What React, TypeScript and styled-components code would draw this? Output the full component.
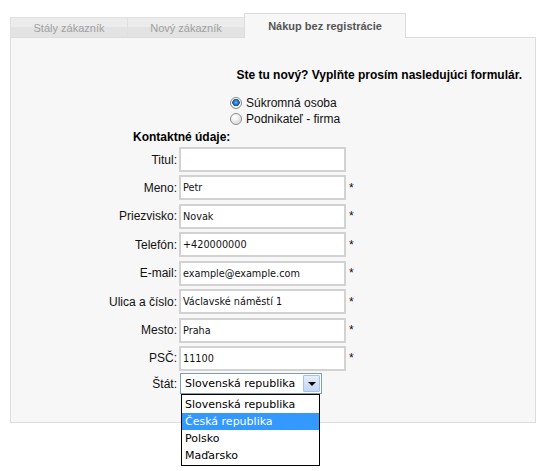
import React from "react";
import styled, { createGlobalStyle } from "styled-components";

const Global = createGlobalStyle`
  html, body { margin: 0; padding: 0; background: #ffffff; }
  body { font-family: "Liberation Sans", Arial, sans-serif; font-size: 12px; color: #111; }
`;

const Page = styled.div`
  box-sizing: border-box;
  padding: 13px 0 0 10px;
  width: 546px;
  min-height: 471px;
`;

const Frame = styled.div`
  width: 526px;
`;

const TabBar = styled.div`
  display: flex;
  align-items: flex-end;
  border-bottom: 1px solid #dddddd;
`;

const Tab = styled.div<{ $active?: boolean; $w: number }>`
  box-sizing: border-box;
  width: ${(p) => p.$w}px;
  margin-left: -1px;
  &:first-child { margin-left: 0; }
  height: ${(p) => (p.$active ? 25 : 20)}px;
  margin-bottom: ${(p) => (p.$active ? -1 : 0)}px;
  border: 1px solid ${(p) => (p.$active ? "#dcdcdc" : "#e0e0e0")};
  border-bottom: none;
  background: ${(p) =>
    p.$active
      ? "#f7f7f7"
      : "linear-gradient(to bottom, #ececec 0%, #ececec 50%, #e3e3e3 50%, #e3e3e3 100%)"};
  color: ${(p) => (p.$active ? "#555555" : "#a0a0a0")};
  font-weight: ${(p) => (p.$active ? "bold" : "normal")};
  font-size: 11px;
  display: flex;
  align-items: center;
  justify-content: center;
  padding-bottom: ${(p) => (p.$active ? 1 : 0)}px;
`;

const Panel = styled.div`
  box-sizing: border-box;
  border: 1px solid #dddddd;
  border-top: none;
  background: #f7f7f7;
  padding: 30px 13px 27px 0;
`;

const Heading = styled.div`
  font-weight: bold;
  font-size: 12px;
  line-height: 14px;
  text-align: right;
  color: #000;
`;

const RadioGroup = styled.div`
  margin: 13px 0 0 219px;
  display: flex;
  flex-direction: column;
`;

const RadioRow = styled.label`
  display: flex;
  align-items: center;
  gap: 4px;
  height: 16px;
  font-size: 12px;
  color: #111;
`;

const RadioDot = styled.span<{ $checked?: boolean }>`
  box-sizing: border-box;
  width: 12px;
  height: 12px;
  border-radius: 50%;
  border: 1px solid #8a8a8a;
  background: ${(p) =>
    p.$checked
      ? "radial-gradient(circle at 50% 45%, #6fb3e8 0px, #1f6fb8 2.5px, #174f8a 3.5px, #f4f4f4 4px, #dcdcdc 6px)"
      : "radial-gradient(circle at 40% 35%, #ffffff 0px, #f2f2f2 3px, #d6d6d6 6px)"};
  box-shadow: inset 0 0 0 1px rgba(255, 255, 255, 0.5);
`;

const SectionTitle = styled.div`
  margin: 3px 0 0 122px;
  font-weight: bold;
  font-size: 12px;
  line-height: 14px;
  color: #000;
`;

const FormGrid = styled.div`
  margin-top: 3px;
  display: grid;
  grid-template-columns: 168px 167px 30px;
  grid-template-rows: repeat(8, 25px) 21px;
  row-gap: 3.43px;
  align-items: center;
`;

const Label = styled.div<{ $lift?: number }>`
  text-align: right;
  padding-right: 2px;
  font-size: 12px;
  color: #111;
  margin-top: ${(p) => -(p.$lift || 0)}px;
`;

const TextInput = styled.input`
  box-sizing: border-box;
  width: 167px;
  height: 25px;
  border: 2px solid #d2d2d2;
  background: #ffffff;
  padding: 0 2px;
  margin: 0;
  font-family: "DejaVu Sans", Tahoma, sans-serif;
  font-size: 9.7px;
  color: #111;
  outline: none;
`;

const Required = styled.div`
  padding-left: 3px;
  font-size: 12px;
  color: #111;
`;

const SelectWrap = styled.div`
  position: relative;
  margin: -2.4px 0 0 1px;
  width: 142px;
  height: 21px;
`;

const SelectBox = styled.div`
  box-sizing: border-box;
  width: 142px;
  height: 21px;
  border: 1px solid #7f9db9;
  background: #ffffff;
  display: flex;
  align-items: stretch;
  padding: 1px;
`;

const SelectValue = styled.div`
  flex: 1;
  display: flex;
  align-items: center;
  padding-left: 3px;
  font-family: "DejaVu Sans", Tahoma, sans-serif;
  font-size: 11px;
  color: #000;
  white-space: nowrap;
  overflow: hidden;
`;

const SelectButton = styled.div`
  box-sizing: border-box;
  width: 17px;
  border: 1px solid #aac0e6;
  border-radius: 1px;
  background: linear-gradient(to bottom, #e6eefc 0%, #d4e1f7 50%, #c3d5f5 100%);
  display: flex;
  align-items: center;
  justify-content: center;
`;

const Arrow = styled.span`
  width: 0;
  height: 0;
  border-left: 4px solid transparent;
  border-right: 4px solid transparent;
  border-top: 4px solid #000;
  margin-top: 1px;
`;

const DropList = styled.div`
  position: absolute;
  top: 21px;
  left: 1px;
  box-sizing: border-box;
  width: 139px;
  border: 1px solid #000;
  background: #ffffff;
  padding: 1px 0;
  z-index: 5;
`;

const Option = styled.div<{ $selected?: boolean }>`
  height: 17px;
  line-height: 17px;
  padding-left: 3px;
  font-family: "DejaVu Sans", Tahoma, sans-serif;
  font-size: 11px;
  color: ${(p) => (p.$selected ? "#ffffff" : "#000000")};
  background: ${(p) => (p.$selected ? "#3399ff" : "transparent")};
  white-space: nowrap;
`;

const fields: { label: string; value: string; required: boolean }[] = [
  { label: "Titul:", value: "", required: false },
  { label: "Meno:", value: "Petr", required: true },
  { label: "Priezvisko:", value: "Novak", required: true },
  { label: "Telefón:", value: "+420000000", required: true },
  { label: "E-mail:", value: "example@example.com", required: true },
  { label: "Ulica a číslo:", value: "Václavské náměstí 1", required: true },
  { label: "Mesto:", value: "Praha", required: true },
  { label: "PSČ:", value: "11100", required: true },
];

const countries = ["Slovenská republika", "Česká republika", "Polsko", "Maďarsko"];

export default function App() {
  return (
    <>
      <Global />
      <Page>
        <Frame>
          <TabBar>
            <Tab $w={118}>Stály zákazník</Tab>
            <Tab $w={118}>Nový zákazník</Tab>
            <Tab $w={162} $active>
              Nákup bez registrácie
            </Tab>
          </TabBar>
          <Panel>
            <Heading>Ste tu nový? Vyplňte prosím nasledujúci formulár.</Heading>
            <RadioGroup>
              <RadioRow>
                <RadioDot $checked />
                Súkromná osoba
              </RadioRow>
              <RadioRow>
                <RadioDot />
                Podnikateľ - firma
              </RadioRow>
            </RadioGroup>
            <SectionTitle>Kontaktné údaje:</SectionTitle>
            <FormGrid>
              {fields.map((f) => (
                <React.Fragment key={f.label}>
                  <Label>{f.label}</Label>
                  <TextInput readOnly value={f.value} />
                  <Required>{f.required ? "*" : ""}</Required>
                </React.Fragment>
              ))}
              <Label $lift={2.4}>Štát:</Label>
              <SelectWrap>
                <SelectBox>
                  <SelectValue>Slovenská republika</SelectValue>
                  <SelectButton>
                    <Arrow />
                  </SelectButton>
                </SelectBox>
                <DropList>
                  {countries.map((c, i) => (
                    <Option key={c} $selected={i === 1}>
                      {c}
                    </Option>
                  ))}
                </DropList>
              </SelectWrap>
              <div />
            </FormGrid>
          </Panel>
        </Frame>
      </Page>
    </>
  );
}
